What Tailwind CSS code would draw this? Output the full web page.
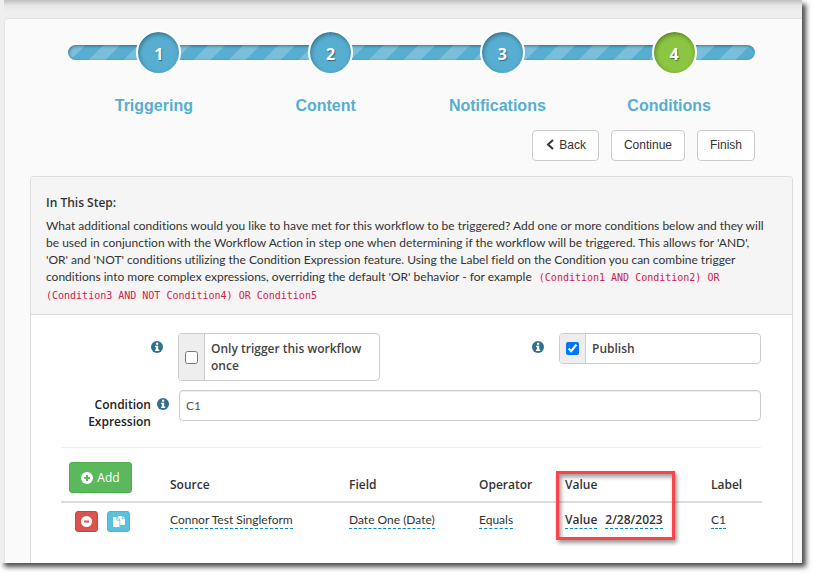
<!DOCTYPE html>
<html lang="en">
<head>
<meta charset="utf-8">
<meta name="viewport" content="width=device-width, initial-scale=1">
<title>Workflow conditions</title>
<script src="https://cdn.jsdelivr.net/npm/@tailwindcss/browser@4"></script>
</head>
<body class="bg-white font-['Lato','Open_Sans',sans-serif] text-xs text-[#333] [font-variant-ligatures:none]">
<svg class="hidden" aria-hidden="true">
  <symbol id="info" viewBox="0 0 12 12"><circle cx="6" cy="6" r="6" fill="#31708f"/><path d="M5 1.8h2.2v2H5zM4 4.8h3.2v3.6H8.200V10H4V8.400h1V6.300H4z" fill="#fff"/></symbol>
</svg>
<div class="flex h-screen flex-col pr-[15px] pb-[15px]">
  <div class="flex min-h-0 flex-1 flex-col bg-[#eee] shadow-[4px_4px_5px_rgba(0,0,0,0.7)]">
    <div class="ml-1 h-[18px] shrink-0 bg-linear-to-b from-[#c0c0c0] via-[#e6e6e6] via-30% to-[#eee] to-60%"></div>
    <main class="ml-1 flex min-h-0 flex-1 flex-col overflow-hidden rounded-tl-sm border-t border-l border-[#e3e3e3] bg-[#fafafa]">
      <div class="pr-[47px] pl-[63px]">
        <nav class="relative pt-[11px]" aria-label="Steps">
          <div class="absolute inset-x-0 top-[26px] h-[15px] rounded-full bg-[#57aed1] bg-[linear-gradient(135deg,rgba(255,255,255,0.2)_25%,transparent_25%,transparent_50%,rgba(255,255,255,0.2)_50%,rgba(255,255,255,0.2)_75%,transparent_75%)] [background-size:35px_35px] shadow-[inset_1px_1px_3px_rgba(0,0,0,0.4)]"></div>
          <ol class="relative grid grid-cols-4 text-center text-base font-bold text-[#57aed1]">
            <li><div class="flex justify-center pl-[10px]"><span class="flex size-[45px] items-center justify-center rounded-full border-2 border-white bg-[#57aed1] pt-[2px] font-['Open_Sans',sans-serif] text-white shadow-[inset_1px_2px_4px_rgba(0,0,0,0.35)] [text-shadow:1px_1px_1px_rgba(0,0,0,0.4)]">1</span></div><a href="#" class="mt-[19px] block font-['Liberation_Sans',sans-serif]">Triggering</a></li>
            <li><div class="flex justify-center pl-[10px]"><span class="flex size-[45px] items-center justify-center rounded-full border-2 border-white bg-[#57aed1] pt-[2px] font-['Open_Sans',sans-serif] text-white shadow-[inset_1px_2px_4px_rgba(0,0,0,0.35)] [text-shadow:1px_1px_1px_rgba(0,0,0,0.4)]">2</span></div><a href="#" class="mt-[19px] block font-['Liberation_Sans',sans-serif]">Content</a></li>
            <li><div class="flex justify-center pl-[10px]"><span class="flex size-[45px] items-center justify-center rounded-full border-2 border-white bg-[#57aed1] pt-[2px] font-['Open_Sans',sans-serif] text-white shadow-[inset_1px_2px_4px_rgba(0,0,0,0.35)] [text-shadow:1px_1px_1px_rgba(0,0,0,0.4)]">3</span></div><a href="#" class="mt-[19px] block font-['Liberation_Sans',sans-serif]">Notifications</a></li>
            <li><div class="flex justify-center pl-[10px]"><span class="flex size-[45px] items-center justify-center rounded-full border-2 border-white bg-[#8bc541] pt-[2px] font-['Open_Sans',sans-serif] text-white shadow-[inset_1px_2px_4px_rgba(0,0,0,0.35)] [text-shadow:1px_1px_1px_rgba(0,0,0,0.4)]">4</span></div><a href="#" class="mt-[19px] block font-['Liberation_Sans',sans-serif]">Conditions</a></li>
          </ol>
        </nav>
        <div class="mt-[12px] flex justify-end gap-3 font-['Liberation_Sans',sans-serif]">
          <button type="button" class="flex h-[31px] items-center gap-1 rounded-[4px] border border-[#ccc] bg-white px-3 pb-px"><svg class="h-3 w-[10px]" viewBox="0 0 10 12" fill="none" stroke="#333" stroke-width="2"><path d="M8 1 3 5.500l5 4.500"/></svg>Back</button>
          <button type="button" class="h-[31px] rounded-[4px] border border-[#ccc] bg-white px-3 pb-px">Continue</button>
          <button type="button" class="h-[31px] rounded-[4px] border border-[#ccc] bg-white px-3 pb-px">Finish</button>
        </div>
      </div>

      <section class="mt-[15px] mr-[9px] ml-[25px] flex-1 rounded-t-[4px] border border-b-0 border-[#ddd] bg-white">
        <header class="rounded-t-[4px] border-b border-[#ddd] bg-[#f5f5f5] px-[15px] pt-[17px] pb-[10px] leading-[17px]">
          <h1 class="mb-[6px] font-['Open_Sans',sans-serif] font-semibold">In This Step:</h1>
          <p>What additional conditions would you like to have met for this workflow to be triggered? Add one or more conditions below and they will be used in conjunction with the Workflow Action in step one when determining if the workflow will be triggered. This allows for 'AND',<br>'OR' and 'NOT' conditions utilizing the Condition Expression feature. Using the Label field on the Condition you can combine trigger<br>conditions into more complex expressions, overriding the default 'OR' behavior - for example <code class="rounded-[4px] bg-[#f9f2f4] px-1 font-['DejaVu_Sans_Mono',monospace] text-[10px] text-[#c7254e]">(Condition1 AND Condition2) OR<br>(Condition3 AND NOT Condition4) OR Condition5</code></p>
        </header>

        <form class="pt-[18px] pr-[31px] pl-[30px] leading-[17px]">
          <div class="grid grid-cols-[117px_202px_1fr_202px] items-start">
            <svg class="mt-2 mr-[15px] size-3 justify-self-end" aria-label="Help"><use href="#info"/></svg>
            <div class="flex rounded-[4px] border border-[#ccc] bg-white font-['Open_Sans',sans-serif] font-semibold text-[#444]">
              <div class="flex w-[26px] shrink-0 items-center justify-center rounded-l-[3px] border-r border-[#ccc] bg-[#eee]"><input id="once" type="checkbox" class="size-[13px]"></div>
              <label for="once" class="px-[6px] py-[6px]">Only trigger this workflow once</label>
            </div>
            <svg class="mt-2 mr-[15px] size-3 justify-self-end" aria-label="Help"><use href="#info"/></svg>
            <div class="flex rounded-[4px] border border-[#ccc] bg-white font-['Open_Sans',sans-serif] font-semibold text-[#444]">
              <div class="flex w-[26px] shrink-0 items-center justify-center rounded-l-[3px] border-r border-[#ccc] bg-[#eee]"><input id="publish" type="checkbox" checked class="size-[13px]"></div>
              <label for="publish" class="px-[6px] py-[6px]">Publish</label>
            </div>
          </div>
          <div class="mt-[9px] grid grid-cols-[117px_1fr] items-start">
            <div class="flex gap-[6px] pt-[6px] pr-[9px]">
              <label for="expr" class="flex-1 text-right font-['Open_Sans',sans-serif] font-semibold text-[#222]">Condition Expression</label>
              <svg class="mt-[2px] size-3 shrink-0" aria-label="Help"><use href="#info"/></svg>
            </div>
            <input id="expr" type="text" value="C1" class="ml-px h-[31px] rounded-[4px] border border-[#ccc] bg-white px-[6px] text-[#555] shadow-[inset_0_1px_1px_rgba(0,0,0,0.075)]">
          </div>
          <hr class="mt-[17px] border-[#eee]">

          <table class="mt-[6px] w-[calc(100%+1px)] table-fixed text-left">
            <colgroup><col class="w-[101px]"><col class="w-[179px]"><col class="w-[130px]"><col class="w-[86px]"><col class="w-[146px]"><col></colgroup>
            <thead class="font-['Open_Sans',sans-serif]">
              <tr class="border-b-2 border-[#ddd] align-bottom">
                <th class="p-2"><button type="button" class="flex h-[31px] w-[63px] items-center justify-center gap-1 rounded-[3px] border border-[#4cae4c] bg-[#5cb85c] font-normal text-white"><svg class="size-3" viewBox="0 0 12 12"><circle cx="6" cy="6" r="6" fill="#fff"/><path d="M5 3h2v2h2v2H7v2H5V7H3V5h2z" fill="#5cb85c"/></svg>Add</button></th>
                <th class="p-2 font-semibold">Source</th>
                <th class="p-2 font-semibold">Field</th>
                <th class="p-2 font-semibold">Operator</th>
                <th class="relative p-2 font-semibold">Value<span class="pointer-events-none absolute top-[17px] -left-px h-[69px] w-[119px] border-3 border-[#fc4347] shadow-[2px_3px_4px_rgba(0,0,0,0.4),inset_2px_3px_4px_rgba(0,0,0,0.4)]"></span></th>
                <th class="p-2 font-semibold">Label</th>
              </tr>
            </thead>
            <tbody>
              <tr class="align-top">
                <td class="p-2"><div class="flex gap-[9px] pl-[6px]">
                  <button type="button" aria-label="Remove" class="flex h-[21px] w-[23px] items-center justify-center rounded-[3px] border border-[#d43f3a] bg-[#d9534f]"><svg class="size-[11px]" viewBox="0 0 11 11"><circle cx="5.500" cy="5.500" r="5.500" fill="#fff"/><path d="M3 4.500h5v2H3z" fill="#d9534f"/></svg></button>
                  <button type="button" aria-label="Duplicate" class="flex h-[21px] w-[23px] items-center justify-center rounded-[3px] border border-[#46b8da] bg-[#5bc0de]"><svg class="h-[11px] w-3" viewBox="0 0 12 11" fill="#fff"><path d="M0 1h3.500v3.500H6.500V11H0z"/><path d="M4.300 1.200 6.500 3.700H4.300z"/><path d="M5 0h3.800v3.300H12V9H7.200V3.400L5 1z"/><path d="M9.600 0 12 2.500H9.600z"/></svg></button>
                </div></td>
                <td class="p-2"><a href="#" class="inline-block border-b border-dashed border-[#08c]">Connor Test Singleform</a></td>
                <td class="p-2"><a href="#" class="inline-block border-b border-dashed border-[#08c]">Date One (Date)</a></td>
                <td class="p-2"><a href="#" class="inline-block border-b border-dashed border-[#08c]">Equals</a></td>
                <td class="p-2 font-['Open_Sans',sans-serif] font-semibold"><div class="flex gap-2"><a href="#" class="border-b border-dashed border-[#08c]">Value</a><a href="#" class="border-b border-dashed border-[#08c]">2/28/2023</a></div></td>
                <td class="p-2"><a href="#" class="inline-block border-b border-dashed border-[#08c]">C1</a></td>
              </tr>
            </tbody>
          </table>
        </form>
      </section>
    </main>
  </div>
</div>
</body>
</html>
